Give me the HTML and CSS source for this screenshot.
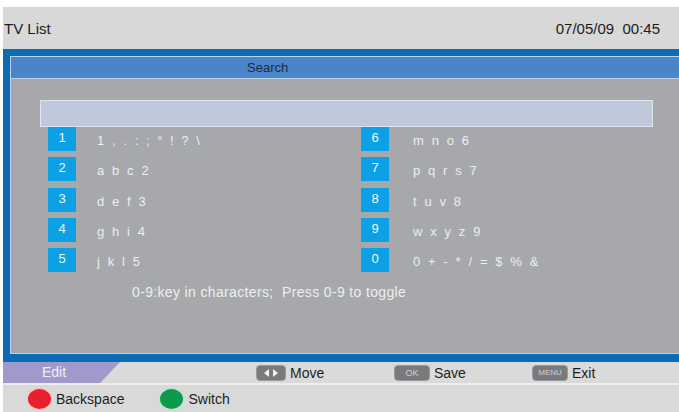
FILE: index.html
```html
<!DOCTYPE html>
<html lang="en">
<head>
<meta charset="utf-8">
<title>TV List - Search</title>
<link rel="stylesheet" href="styles.css">
</head>
<body>
<div class="screen">
  <header class="header">
    <span class="header-title">TV List</span>
    <span class="header-clock">07/05/09&nbsp;&nbsp;00:45</span>
  </header>

  <section class="frame">
    <div class="panel">
      <div class="panel-title">Search</div>
      <div class="panel-body">
        <div class="search-input"></div>
        <div class="keymap">
          <ul class="keymap-col">
            <li class="keymap-row"><span class="key-num">1</span><span class="key-chars">1 , . : ; “ ! ? \</span></li>
            <li class="keymap-row"><span class="key-num">2</span><span class="key-chars">a b c 2</span></li>
            <li class="keymap-row"><span class="key-num">3</span><span class="key-chars">d e f 3</span></li>
            <li class="keymap-row"><span class="key-num">4</span><span class="key-chars">g h i 4</span></li>
            <li class="keymap-row"><span class="key-num">5</span><span class="key-chars">j k l 5</span></li>
          </ul>
          <ul class="keymap-col keymap-col-right">
            <li class="keymap-row"><span class="key-num">6</span><span class="key-chars">m n o 6</span></li>
            <li class="keymap-row"><span class="key-num">7</span><span class="key-chars">p q r s 7</span></li>
            <li class="keymap-row"><span class="key-num">8</span><span class="key-chars">t u v 8</span></li>
            <li class="keymap-row"><span class="key-num">9</span><span class="key-chars">w x y z 9</span></li>
            <li class="keymap-row"><span class="key-num">0</span><span class="key-chars">0 + - * / = $ % &amp;</span></li>
          </ul>
        </div>
        <p class="keymap-hint">0-9:key in characters;&nbsp;&nbsp;Press 0-9 to toggle</p>
      </div>
    </div>
  </section>

  <footer class="footer">
    <div class="footer-row footer-nav">
      <div class="mode-tab">Edit</div>
      <div class="nav-item nav-item-first">
        <span class="keycap keycap-arrows">
          <svg width="18" height="10" viewBox="0 0 18 10"><path d="M7 1 L2 5 L7 9 Z" fill="#f2f2f2"/><path d="M11 1 L16 5 L11 9 Z" fill="#f2f2f2"/></svg>
        </span>
        <span class="nav-label">Move</span>
      </div>
      <div class="nav-item">
        <span class="keycap keycap-ok">OK</span>
        <span class="nav-label">Save</span>
      </div>
      <div class="nav-item">
        <span class="keycap keycap-menu">MENU</span>
        <span class="nav-label">Exit</span>
      </div>
    </div>
    <div class="footer-row footer-colors">
      <div class="color-item"><span class="color-dot dot-red"></span><span class="color-label">Backspace</span></div>
      <div class="color-item color-item-green"><span class="color-dot dot-green"></span><span class="color-label">Switch</span></div>
    </div>
  </footer>
</div>
</body>
</html>
```

FILE: styles.css
```css
* {
  box-sizing: border-box;
}

html, body {
  margin: 0;
  padding: 0;
  background: #ffffff;
}

body {
  width: 679px;
  height: 412px;
  overflow: hidden;
  font-family: "Liberation Sans", Arial, sans-serif;
}

.screen {
  padding: 7px 0 0 3px;
  display: flex;
  flex-direction: column;
  height: 412px;
}

/* top bar */
.header {
  height: 42px;
  background: #d8d8d8;
  display: flex;
  align-items: center;
  justify-content: space-between;
  padding: 0 19px 0 1px;
  font-size: 15px;
  color: #1c1c1c;
}

/* blue window frame, open on the right */
.frame {
  height: 313px;
  background: #0d6ab5;
  padding: 7px 0 8px 7px;
}

.panel {
  height: 100%;
  border: 1px solid #b9d3ec;
  border-right: none;
  display: flex;
  flex-direction: column;
}

.panel-title {
  height: 22px;
  background: #4a86c7;
  border-bottom: 1px solid #b9d3ec;
  font-size: 13px;
  color: #1b2b45;
  line-height: 21px;
  padding-left: 236px;
}

.panel-body {
  flex: 1;
  background: #a7a8ac;
  padding: 21px 0 0 29px;
}

.search-input {
  width: 613px;
  height: 27px;
  background: #bfc9db;
  border: 1px solid #dfe5ee;
}

/* number keys */
.keymap {
  display: flex;
  padding-left: 8px;
}

.keymap-col {
  list-style: none;
  margin: 0;
  padding: 0;
  width: 313px;
  display: flex;
  flex-direction: column;
  gap: 6.35px;
}

.keymap-row {
  display: flex;
  align-items: center;
  height: 24px;
}

.key-num {
  width: 28px;
  height: 24px;
  background: #0ba1e4;
  color: #f4f8fc;
  font-size: 13px;
  text-align: center;
  line-height: 21px;
}

.key-chars {
  margin-left: 21px;
  font-size: 13px;
  letter-spacing: 2.1px;
  color: #eceef0;
  padding-top: 3px;
}

.keymap-col-right .key-chars {
  margin-left: 24px;
}

.keymap-hint {
  margin: 12px 0 0 92px;
  font-size: 14px;
  letter-spacing: 0.35px;
  color: #eceef0;
}

/* footer */
.footer {
  flex: 1;
  display: flex;
  flex-direction: column;
}

.footer-row {
  display: flex;
  align-items: center;
}

.footer-nav {
  height: 23px;
  background: #dadada;
  border-bottom: 2px solid #ededed;
}

.mode-tab {
  width: 117px;
  height: 100%;
  background: #9f99cc;
  clip-path: polygon(0 0, 100% 0, 83% 100%, 0 100%);
  color: #f1f1f4;
  font-size: 14px;
  line-height: 21px;
  padding-left: 39px;
}

.nav-item {
  display: flex;
  align-items: center;
  gap: 4px;
  width: 138px;
}

.nav-item-first {
  margin-left: 136px;
}

.keycap {
  height: 16px;
  border-radius: 4px;
  background: #7a7a7c;
  border: 1px solid #9a9a9c;
  color: #d2d2d2;
  display: flex;
  align-items: center;
  justify-content: center;
  font-size: 8px;
}

.keycap-arrows {
  width: 30px;
}

.keycap-ok {
  width: 36px;
  font-size: 9px;
}

.keycap-menu {
  width: 36px;
  font-size: 8px;
}

.nav-label {
  font-size: 14px;
  color: #1e1e1e;
}

.footer-colors {
  flex: 1;
  background: #d9d9d9;
  padding-left: 24px;
}

.color-item {
  display: flex;
  align-items: center;
  gap: 4px;
}

.color-item-green {
  margin-left: 35px;
}

.color-dot {
  width: 25px;
  height: 22px;
  border-radius: 50%;
}

.dot-red {
  background: #e8202c;
  border: 1px solid #f4c4c4;
}

.dot-green {
  background: #0b9a4c;
  border: 1px solid #bfe8cc;
}

.color-label {
  font-size: 14px;
  color: #1e1e1e;
}
```
